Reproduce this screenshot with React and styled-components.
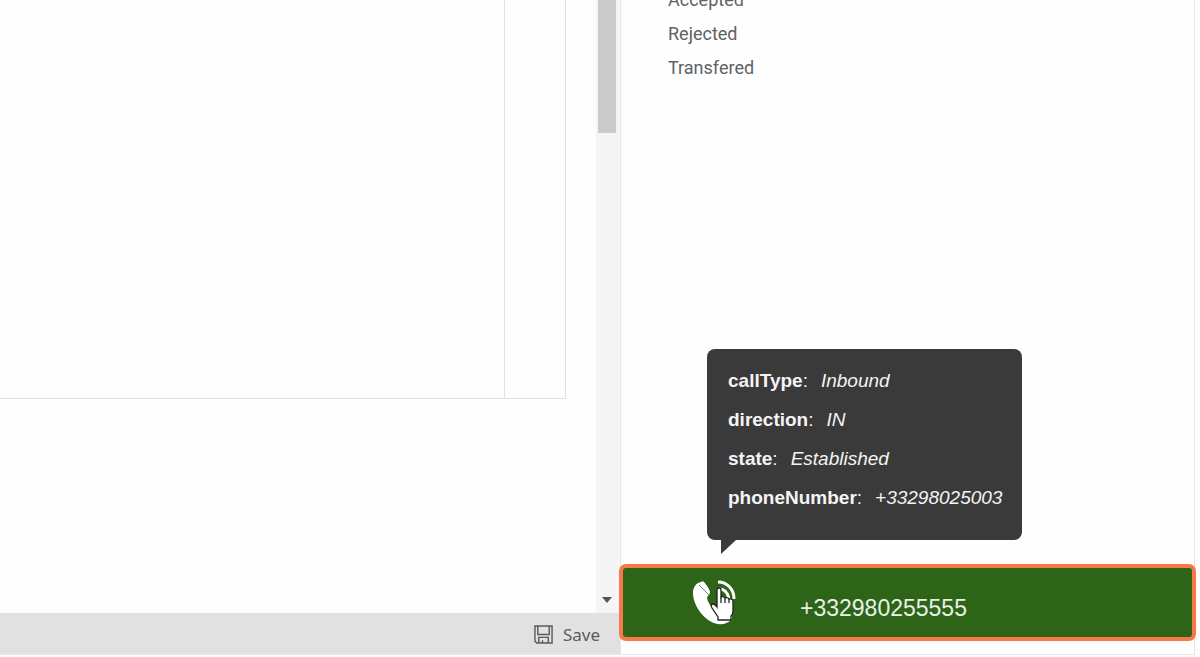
import React from 'react';
import styled, { createGlobalStyle } from 'styled-components';

const GlobalStyle = createGlobalStyle`
  *, *::before, *::after { box-sizing: border-box; }
  body { margin: 0; background: #fefefe; }
`;

const Page = styled.div`
  display: flex;
  min-height: 100vh;
  padding: 0 5px 2px 0;
  overflow: hidden;
  font-family: "Liberation Sans", Arial, sans-serif;
`;

const Workspace = styled.main`
  flex: 1;
  min-width: 0;
  display: flex;
  flex-direction: column;
  border-bottom: 1px solid #e9e9e9;
`;

const ScrollArea = styled.div`
  flex: 1;
  display: flex;
`;

const Canvas = styled.div`
  flex: 1;
  padding-right: 30px;
`;

const Sheet = styled.section`
  display: flex;
  justify-content: flex-end;
  height: 399px;
  border: solid #e0e0e0;
  border-width: 0 1px 1px 0;
`;

const SheetMargin = styled.div`
  width: 61px;
  border-left: 1px solid #e4e4e4;
`;

const ScrollTrack = styled.div`
  width: 24px;
  display: flex;
  flex-direction: column;
  justify-content: space-between;
  align-items: center;
  padding: 0 4px 10px 2px;
  background: #f5f5f5;
`;

const ScrollThumb = styled.div`
  width: 18px;
  height: 133px;
  background: #cbcbcb;
`;

const Footer = styled.footer`
  display: flex;
  justify-content: flex-end;
  align-items: center;
  height: 41px;
  padding: 2px 20px 0 0;
  background: #e1e1e1;
`;

const SaveButton = styled.button`
  display: flex;
  align-items: center;
  gap: 10px;
  padding: 0;
  border: 0;
  background: none;
  color: #5b5b5b;
  font: 17px/24px "Noto Sans", "Open Sans", sans-serif;
`;

const SidePanel = styled.aside`
  flex: 0 0 575px;
  display: flex;
  flex-direction: column;
  justify-content: space-between;
  padding-bottom: 13px;
  border: solid #e6e6e6;
  border-width: 0 1px 1px;
`;

const ListViewport = styled.div`
  overflow: hidden;
`;

const StatusList = styled.ul`
  margin: -17px 0 0;
  padding: 0 47px;
  list-style: none;
`;

const StatusItem = styled.li`
  color: #5f6266;
  font: 18px/34px Roboto, sans-serif;
`;

const CallArea = styled.div`
  position: relative;
  margin: 0 -2px;
`;

const CallButton = styled.button`
  display: flex;
  align-items: center;
  width: 100%;
  height: 77px;
  padding: 0 69px;
  gap: 64px;
  border: 4px solid #f7784b;
  border-radius: 7px;
  background: #2d6418;
  color: #e9f1e6;
  font: 23px/28px "Liberation Sans", Arial, sans-serif;
`;

const CallNumber = styled.span`
  padding-top: 10px;
`;

const Tooltip = styled.div`
  position: absolute;
  left: 88px;
  bottom: 101px;
  padding: 12px 20px 23px 21px;
  border-radius: 8px;
  background: #3a3a3a;
  color: #f4f4f4;
  font-size: 19px;
  line-height: 39px;
  white-space: nowrap;
`;

const TooltipTail = styled.svg`
  position: absolute;
  left: 14px;
  top: 100%;
`;

const Details = styled.dl`
  margin: 0;
`;

const Detail = styled.div`
  display: flex;
  gap: 13px;
`;

const Term = styled.dt`
  &::after { content: ":"; }
`;

const Value = styled.dd`
  margin: 0;
  font-style: italic;
`;

const Pointer = styled.svg`
  position: absolute;
  left: 91px;
  top: 23px;
  pointer-events: none;
`;

const statuses = ['Accepted', 'Rejected', 'Transfered'];

const details = [
  ['callType', 'Inbound'],
  ['direction', 'IN'],
  ['state', 'Established'],
  ['phoneNumber', '+33298025003'],
];

function SaveIcon() {
  return (
    <svg width="19" height="19" viewBox="0 0 20 20" fill="none" stroke="#5b5b5b" strokeWidth="1.5" aria-hidden="true">
      <path d="M1 1h18v18H3l-2-2z" />
      <path d="M4 1v9h12V1M5 19v-6h10v6M9 19v-3" />
    </svg>
  );
}

function PhoneIcon() {
  return (
    <svg width="44" height="46" viewBox="0 0 44 46" aria-hidden="true">
      <path
        fill="#fff"
        d="M9 2C4 3 1 7 1 13c0 13 12 29 25 31 5 1 10-1 13-4 2-2 1-4-1-6l-5-3c-2-1-4 0-6 1-5-1-11-8-12-14 0-2 3-3 3-6 0-2-4-8-6-10-1-1-2-1-3 0z"
      />
      <path d="M7 5l10 10M30 32l10 8" stroke="#6f8d65" strokeWidth="1" />
      <path d="M26 2c9 0 16 7 16 17" fill="none" stroke="#fff" strokeWidth="3" />
      <path d="M27 9c6 0 9 4 10 10" fill="none" stroke="#fff" strokeWidth="3" />
    </svg>
  );
}

export default function App() {
  return (
    <>
      <GlobalStyle />
      <Page>
        <Workspace>
          <ScrollArea>
            <Canvas>
              <Sheet>
                <SheetMargin />
              </Sheet>
            </Canvas>
            <ScrollTrack>
              <ScrollThumb />
              <svg width="10" height="6" viewBox="0 0 10 6" aria-hidden="true">
                <path d="M0 0h10L5 6z" fill="#555" />
              </svg>
            </ScrollTrack>
          </ScrollArea>
          <Footer>
            <SaveButton type="button">
              <SaveIcon />
              Save
            </SaveButton>
          </Footer>
        </Workspace>
        <SidePanel>
          <ListViewport>
            <StatusList>
              {statuses.map((status) => (
                <StatusItem key={status}>{status}</StatusItem>
              ))}
            </StatusList>
          </ListViewport>
          <CallArea>
            <Tooltip role="tooltip" id="call-details">
              <Details>
                {details.map(([term, value]) => (
                  <Detail key={term}>
                    <Term><b>{term}</b></Term>
                    <Value>{value}</Value>
                  </Detail>
                ))}
              </Details>
              <TooltipTail width="16" height="14" viewBox="0 0 16 14" aria-hidden="true">
                <path d="M0 0h15L0 14z" fill="#3a3a3a" />
              </TooltipTail>
            </Tooltip>
            <CallButton type="button" aria-describedby="call-details">
              <PhoneIcon />
              <CallNumber>+332980255555</CallNumber>
            </CallButton>
            <Pointer width="24" height="34" viewBox="0 0 24 34" aria-hidden="true">
              <path
                d="M7 18V3q0-2 2-2t2 2v7q3-1 4 1 3-1 4 1 4-1 4 3v9q0 3-2 5v4H8v-3l-6-9q-2-4 1-4 2 0 4 3z"
                fill="#fff"
                stroke="#222"
                strokeWidth="1.300"
              />
              <path d="M11 10v6M15 11v5M19 12v4" stroke="#222" strokeWidth="1.300" />
            </Pointer>
          </CallArea>
        </SidePanel>
      </Page>
    </>
  );
}
